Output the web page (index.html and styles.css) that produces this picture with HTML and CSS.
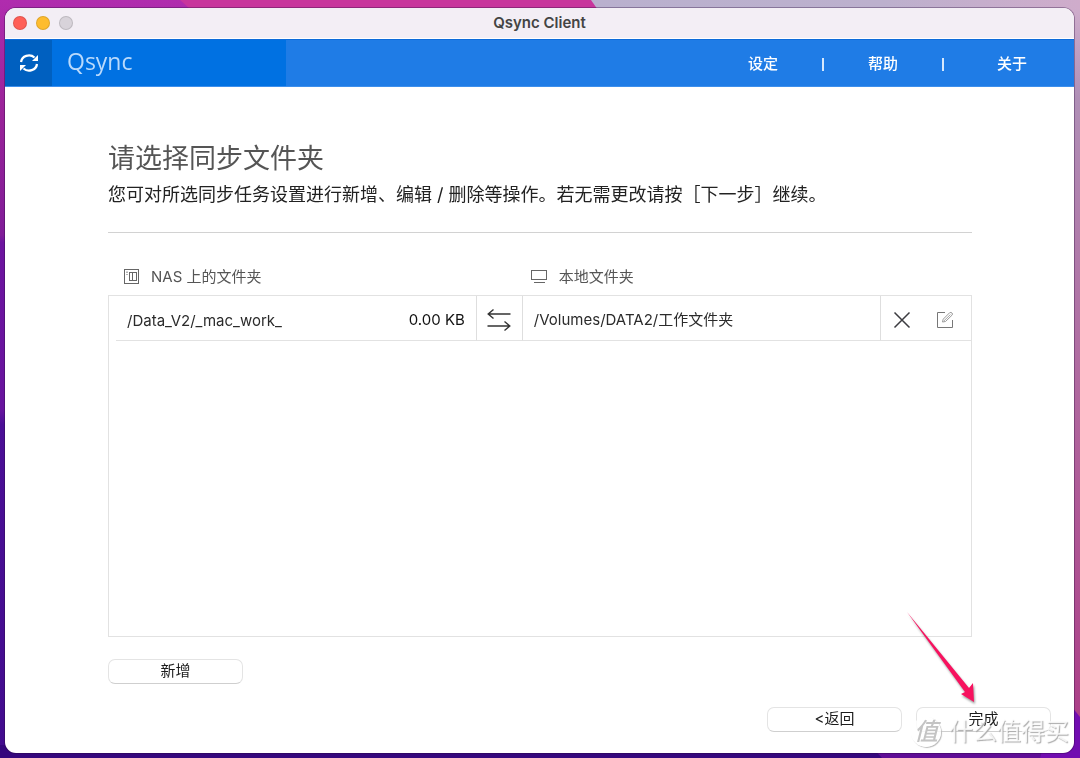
FILE: index.html
```html
<!DOCTYPE html>
<html lang="zh-CN">
<head>
<meta charset="utf-8">
<meta name="viewport" content="width=device-width, initial-scale=1">
<title>Qsync Client</title>
<link rel="stylesheet" href="styles.css">
</head>
<body>
<svg class="wallpaper" viewBox="0 0 1080 758" preserveAspectRatio="none" aria-hidden="true">
  <defs>
    <linearGradient id="left" x1="0" y1="0" x2="0" y2="1">
      <stop offset="0" stop-color="#b02cae"/>
      <stop offset="0.15" stop-color="#9a2399"/>
      <stop offset="0.31" stop-color="#801c98"/>
      <stop offset="0.32" stop-color="#6d149f"/>
      <stop offset="0.54" stop-color="#68149e"/>
      <stop offset="0.56" stop-color="#4b0f96"/>
      <stop offset="1" stop-color="#420c8e"/>
    </linearGradient>
    <linearGradient id="right" x1="0" y1="0" x2="0" y2="1">
      <stop offset="0" stop-color="#ceaccb"/>
      <stop offset="0.12" stop-color="#b08fb6"/>
      <stop offset="0.5" stop-color="#b0699f"/>
      <stop offset="0.94" stop-color="#ac4088"/>
    </linearGradient>
    <linearGradient id="top" x1="0" y1="0" x2="1" y2="0">
      <stop offset="0" stop-color="#b9b0ce"/>
      <stop offset="0.6" stop-color="#bcb0cd"/>
      <stop offset="1" stop-color="#cfaccb"/>
    </linearGradient>
  </defs>
  <rect width="1080" height="758" fill="url(#left)"/>
  <path d="M180 0H592L600 9H190z" fill="#c8359c"/>
  <path d="M591 0H1080V30H612z" fill="url(#top)"/>
  <rect x="1060" y="9" width="20" height="749" fill="url(#right)"/>
  <path d="M0 745H1080V758H0z" fill="#35077d"/>
  <path d="M870 745H1080V758H882z" fill="#5f0d96"/>
  <path d="M1060 692L1080 717V758H1040z" fill="#710cb0"/>
</svg>

<div class="window">
  <header class="titlebar">
    <div class="lights">
      <button class="light close" aria-label="关闭"></button>
      <button class="light minimize" aria-label="最小化"></button>
      <button class="light zoom" aria-label="缩放" disabled></button>
    </div>
    <h1 class="window-title">Qsync Client</h1>
  </header>

  <div class="toolbar">
    <div class="logo">
      <svg width="20" height="20" viewBox="0 0 20 20" fill="none" stroke="#fff" stroke-width="2.3" aria-hidden="true">
        <path d="M2 9A8 7.5 0 0 1 15.5 4.5"/>
        <path d="M18 11A8 7.5 0 0 1 4.500 15.500"/>
        <path d="M19 2V8H13z" fill="#fff" stroke="none"/>
        <path d="M1 18V12H7z" fill="#fff" stroke="none"/>
      </svg>
    </div>
    <div class="brand">Qsync</div>
    <nav class="menu">
      <a href="#settings">设定</a>
      <span class="bar"></span>
      <a href="#help">帮助</a>
      <span class="bar"></span>
      <a class="about" href="#about">关于</a>
    </nav>
  </div>

  <main class="content">
    <h2 class="heading">请选择同步文件夹</h2>
    <p class="intro">您可对所选同步任务设置进行新增、编辑 / 删除等操作。若无需更改请按［下一步］继续。</p>

    <div class="pairs">
      <table class="pair-table">
        <colgroup>
          <col class="col-name"><col class="col-size"><col class="col-swap"><col><col class="col-actions">
        </colgroup>
        <thead>
          <tr>
            <th colspan="3" scope="col">
              <span class="label nas">
                <svg width="16" height="16" viewBox="0 0 16 16" fill="none" stroke="#666" aria-hidden="true">
                  <rect x="0.5" y="0.5" width="14" height="14"/>
                  <rect x="5.500" y="3.500" width="3" height="8"/>
                  <rect x="8.500" y="3.500" width="4" height="8"/>
                  <path d="M3 2.500v1.500M3 5v1"/>
                </svg>
                NAS 上的文件夹
              </span>
            </th>
            <th colspan="2" scope="col">
              <span class="label local">
                <svg width="17" height="16" viewBox="0 0 17 16" fill="none" stroke="#666" aria-hidden="true">
                  <rect x="0.5" y="1.500" width="15" height="9"/>
                  <path d="M3 13.500h11"/>
                </svg>
                本地文件夹
              </span>
            </th>
          </tr>
        </thead>
        <tbody>
          <tr>
            <td class="name">/Data_V2/_mac_work_</td>
            <td class="size">0.00 KB</td>
            <td class="swap">
              <svg width="24" height="24" viewBox="0 0 24 24" fill="none" stroke="#333" stroke-width="1.4" aria-hidden="true">
                <path d="M23.500 6H1.500M6.500 1.500L1.200 6L6.500 10.500M0.500 18H22.500M17.500 13.500L22.800 18L17.500 22.500"/>
              </svg>
            </td>
            <td class="path">/Volumes/DATA2/工作文件夹</td>
            <td class="actions">
              <div class="action-list">
                <button class="icon-button" aria-label="删除">
                  <svg width="18" height="18" viewBox="0 0 18 18" fill="none" stroke="#3c3c40" stroke-width="1.5" aria-hidden="true">
                    <path d="M1.500 1.500L16.500 16.500M16.500 1.500L1.500 16.500"/>
                  </svg>
                </button>
                <button class="icon-button" aria-label="编辑">
                  <svg width="18" height="18" viewBox="0 0 18 18" fill="none" stroke="#777" aria-hidden="true">
                    <path d="M9 1.500H1.500V16.500H16.500V9"/>
                    <path d="M6.500 11L7.200 8.200L13.700 1.700Q15 1 16 2Q17 3 16 4.200L9.500 10.500Z" stroke="#999"/>
                    <path d="M8 9.800L14.500 3.500" stroke="#aaa"/>
                  </svg>
                </button>
              </div>
            </td>
          </tr>
        </tbody>
      </table>
      <div class="pair-space"></div>
    </div>

    <button class="push">新增</button>
  </main>

  <footer class="footer">
    <button class="push">&lt;返回</button>
    <button class="push">完成</button>
  </footer>
</div>

<svg class="pointer" width="76" height="100" viewBox="0 0 76 100" aria-hidden="true">
  <path d="M4 3L66 79L70 74L71 93L58 85L62 83Z" fill="#f7125f"/>
</svg>
<div class="watermark"><span class="seal">值</span><span>什么值得买</span></div>
</body>
</html>
```
FILE: styles.css
```css
* {
  box-sizing: border-box;
}

body {
  margin: 0;
  min-height: 100vh;
  padding: 8px 6px 5px 5px;
  display: flex;
  font: 15px/20px Inter, "Noto Sans CJK SC", sans-serif;
  color: #2b2b2b;
}

button {
  font: inherit;
  color: inherit;
}

h1, h2, p {
  margin: 0;
  font-weight: 400;
}

.wallpaper {
  position: fixed;
  inset: 0;
  width: 100%;
  height: 100%;
  z-index: -1;
}

.window {
  flex: 1;
  display: flex;
  flex-direction: column;
  background: #fff;
  border-radius: 11px;
  overflow: hidden;
  box-shadow: 0 0 0 1px rgba(40, 10, 60, 0.35);
}

.titlebar {
  display: grid;
  grid-template-columns: 1fr auto 1fr;
  align-items: center;
  height: 31px;
  padding: 0 8px;
  background: #f3eef5;
  border-bottom: 1px solid #fff;
}

.lights {
  display: flex;
  gap: 9px;
}

.light {
  width: 14px;
  height: 14px;
  padding: 0;
  border: 1px solid rgba(0, 0, 0, 0.12);
  border-radius: 50%;
}

.close {
  background: #ff5f57;
}

.minimize {
  background: #febc2e;
}

.zoom {
  background: #d8d3da;
}

.window-title {
  font-size: 15px;
  font-weight: 600;
  color: #444;
}

.toolbar {
  display: flex;
  height: 48px;
  background: #1f7ce6;
  border-top: 1px solid #0d6bd9;
  border-bottom: 1px solid #3d8fec;
}

.logo {
  display: grid;
  place-items: center;
  width: 47px;
  background: #0060c0;
}

.brand {
  width: 234px;
  padding-left: 15px;
  background: #0071e2;
  font-family: "Open Sans", sans-serif;
  font-size: 23px;
  line-height: 42px;
  color: #b9dafc;
}

.menu {
  flex: 1;
  display: flex;
  justify-content: flex-end;
  align-items: center;
  gap: 44px;
  padding: 2px 47px 0 0;
  font-weight: 500;
}

.menu a {
  color: #fff;
  text-decoration: none;
}

.menu .about {
  padding-left: 9px;
}

.bar {
  width: 2px;
  height: 13px;
  background: #d6e8fc;
}

.content {
  flex: 1;
  padding: 52px 102px 0 103px;
}

.heading {
  font-size: 27px;
  line-height: 40px;
  color: #555;
}

.intro {
  padding-bottom: 22px;
  border-bottom: 1px solid #d2d2d2;
  font-size: 18px;
  line-height: 31px;
  color: #222;
}

.pairs {
  display: flex;
  flex-direction: column;
  margin: 25px 0 22px;
}

.pair-table {
  width: 100%;
  table-layout: fixed;
  border-collapse: separate;
  border-spacing: 0;
}

.col-name {
  width: 31%;
}

.col-size {
  width: 101px;
}

.col-swap {
  width: 46px;
}

.col-actions {
  width: 91px;
}

th {
  height: 38px;
  padding: 0;
  border-bottom: 1px solid #e2e2e2;
  font-weight: 400;
  text-align: left;
  color: #555;
}

.label {
  display: flex;
  align-items: center;
  gap: 11px;
}

.nas {
  padding-left: 16px;
}

.local {
  padding-left: 8px;
}

td {
  height: 45px;
  padding: 4px 0 0;
  border-bottom: 1px solid #e2e2e2;
  white-space: nowrap;
}

.name {
  padding-left: 18px;
  border-left: 1px solid #e2e2e2;
  border-bottom: 0;
  background: linear-gradient(#e2e2e2, #e2e2e2) 7px 100% / 100% 1px no-repeat;
}

.size {
  padding-right: 11px;
  border-right: 1px solid #dedede;
  text-align: right;
  color: #111;
}

.swap {
  border-right: 1px solid #dedede;
  text-align: center;
}

.swap svg {
  display: block;
  margin: 0 auto;
}

.path {
  padding-left: 11px;
  border-right: 1px solid #dedede;
}

.actions {
  border-right: 1px solid #e2e2e2;
}

.action-list {
  display: flex;
  gap: 25px;
  padding-left: 12px;
}

.icon-button {
  display: block;
  padding: 0;
  border: 0;
  background: none;
}

.icon-button svg {
  display: block;
}

.pair-space {
  height: 296px;
  border: 1px solid #e2e2e2;
  border-top: 0;
}

.push {
  width: 135px;
  height: 25px;
  padding: 0 0 2px;
  border: 1px solid #e4e4e4;
  border-bottom-color: #cfcfcf;
  border-radius: 7px;
  background: #fff;
  color: #1c1c1c;
}

.footer {
  display: flex;
  justify-content: flex-end;
  gap: 14px;
  padding: 0 23px 21px 0;
}

.pointer {
  position: absolute;
  left: 903px;
  top: 609px;
  filter: drop-shadow(1px 2px 1px rgba(0, 0, 0, 0.4));
  pointer-events: none;
}

.watermark {
  position: absolute;
  right: 11px;
  bottom: 10px;
  display: flex;
  align-items: center;
  gap: 8px;
  font-size: 24px;
  line-height: 32px;
  color: rgba(255, 255, 255, 0.8);
  text-shadow: 1px 1px 1px #aaa;
  pointer-events: none;
}

.seal {
  width: 30px;
  height: 30px;
  border-radius: 50%;
  background: rgba(255, 255, 255, 0.8);
  box-shadow: 1px 1px 1px #bbb;
  font-style: italic;
  font-weight: 500;
  line-height: 29px;
  text-align: center;
  color: #c4c4c4;
  text-shadow: none;
}
```
